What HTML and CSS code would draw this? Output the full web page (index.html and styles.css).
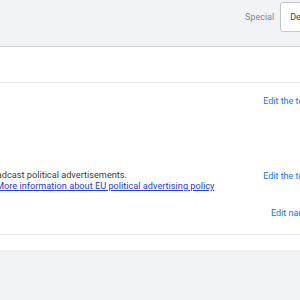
FILE: index.html
```html
<!DOCTYPE html>
<html lang="en">

<head>
    <meta charset="UTF-8">
    <meta name="viewport" content="width=device-width, initial-scale=1.0">
    <title>Campaign settings</title>
    <link rel="stylesheet" href="styles.css">
</head>

<body>
    <div class="topbar">
        <span class="label">Special</span>
        <div class="select">Default</div>
    </div>

    <div class="card">
        <div class="head"></div>

        <div class="row row-a">
            <div class="info"></div>
            <a class="edit" href="#">Edit the terms</a>
        </div>

        <div class="row row-b">
            <div class="info">
                <p>This campaign doesn't broadcast political advertisements.</p>
                <a class="policy" href="#">More information about EU political advertising policy</a>
            </div>
            <a class="edit" href="#">Edit the terms</a>
        </div>

        <div class="row row-c">
            <div class="info"></div>
            <a class="edit" href="#">Edit name</a>
        </div>

        <div class="foot"></div>
    </div>
</body>

</html>
```

FILE: styles.css
```css
html {
    overflow: hidden;
}

body {
    margin: 0;
    width: 300px;
    background: #f1f3f4;
    font-family: Roboto, "Liberation Sans", sans-serif;
    font-size: 9px;
    color: #3c4043;
}

.topbar {
    height: 47px;
    border-bottom: 1px solid #e3e5e8;
    display: flex;
    align-items: flex-start;
    padding-top: 2px;
    box-sizing: border-box;
}

.label {
    margin-left: 245px;
    margin-top: 10px;
    color: #80868b;
}

.select {
    margin-left: 6px;
    height: 30px;
    width: 60px;
    flex: none;
    border: 1px solid #c4c7ca;
    border-radius: 3px;
    box-sizing: border-box;
    padding: 9px 0 0 9px;
    color: #3c4043;
    background: #fff;
}

.card {
    background: #fff;
    margin-left: -4px;
    width: 420px;
    box-shadow: 0 1px 3px rgba(60, 64, 67, .35);
}

.head {
    height: 35px;
    border-bottom: 1px solid #ebebeb;
}

.row {
    display: flex;
}

.info {
    width: 263px;
    flex: none;
    font-size: 9.2px;
}

.info p {
    margin: 0;
    width: 131px;
    display: flex;
    justify-content: flex-end;
    white-space: nowrap;
}

.policy {
    color: #2340d4;
    white-space: nowrap;
}

.edit {
    width: 64px;
    text-align: center;
    color: #1a73e8;
    text-decoration: none;
}

.row-a {
    padding-top: 13px;
    height: 73px;
}

.row-b {
    height: 38px;
}

.row-b .edit {
    padding-top: 2px;
}

.row-c {
    height: 26px;
    padding-top: 1px;
}

.foot {
    height: 15px;
    border-top: 1px solid #e8e8e8;
}
```
